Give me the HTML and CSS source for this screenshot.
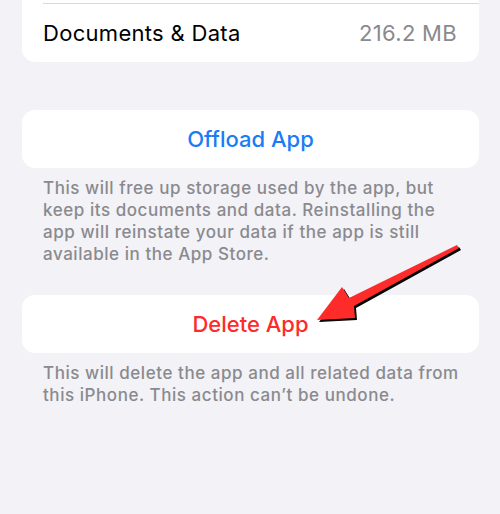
FILE: index.html
```html
<!DOCTYPE html>
<html lang="en">

<head>
    <meta charset="UTF-8">
    <meta name="viewport" content="width=device-width, initial-scale=1.0">
    <title>App Storage</title>
    <link rel="stylesheet" href="styles.css">
</head>

<body>
    <div class="page">
        <div class="group group_top">
            <div class="row">
                <span class="label">Documents &amp; Data</span>
                <span class="value">216.2 MB</span>
            </div>
        </div>

        <div class="group action">
            <button class="btn btn_blue">Offload App</button>
        </div>
        <p class="note">This will free up storage used by the app, but keep its documents and data. Reinstalling the app will reinstate your data if the app is still available in the App Store.</p>

        <div class="group action">
            <button class="btn btn_red">Delete App</button>
        </div>
        <p class="note">This will delete the app and all related data from this iPhone. This action can’t be undone.</p>
    </div>

    <!-- annotation arrow -->
    <svg class="arrow" viewBox="0 0 500 514" width="500" height="514">
        <polygon fill="#000" points="319,322 344,289 351,300 459,247 461,250 356,308 357,320" />
        <polygon fill="#fe2b2b" points="317,320 342,287 349,298 457,245 459,248 354,306 355,318" />
    </svg>
</body>

</html>
```

FILE: styles.css
```css
body {
    margin: 0;
    padding: 0;
    background-color: #f2f2f7;
    font-family: Inter, "Liberation Sans", sans-serif;
    width: 500px;
    height: 514px;
    overflow: hidden;
    position: relative;
}

.page {
    padding: 0 21px 0 22px;
}

.group {
    background-color: #fff;
    border-radius: 13px;
}

.group_top {
    border-radius: 0 0 13px 13px;
    padding-top: 3px;
    margin-bottom: 48px;
}

.row {
    display: flex;
    justify-content: space-between;
    align-items: center;
    margin-left: 21px;
    padding-right: 22px;
    height: 58px;
    border-top: 1px solid #d8d8dc;
}

.label {
    font-size: 22px;
    letter-spacing: 0.3px;
    color: #000;
}

.value {
    font-size: 22px;
    letter-spacing: 0.3px;
    color: #8a8a8e;
}

.action {
    display: flex;
}

.btn {
    flex: 1;
    height: 58px;
    border: none;
    background: transparent;
    font-family: inherit;
    font-size: 22px;
    font-weight: 500;
    cursor: pointer;
}

.btn_blue {
    color: #1a7cf7;
}

.btn_red {
    color: #fe2b2b;
}

.note {
    margin: 0 0 30px 0;
    padding: 9px 16px 0 21px;
    font-size: 17px;
    font-weight: 500;
    letter-spacing: 0.55px;
    line-height: 22px;
    color: #8a8a8e;
}

.arrow {
    position: absolute;
    top: 0;
    left: 0;
    pointer-events: none;
}
```
